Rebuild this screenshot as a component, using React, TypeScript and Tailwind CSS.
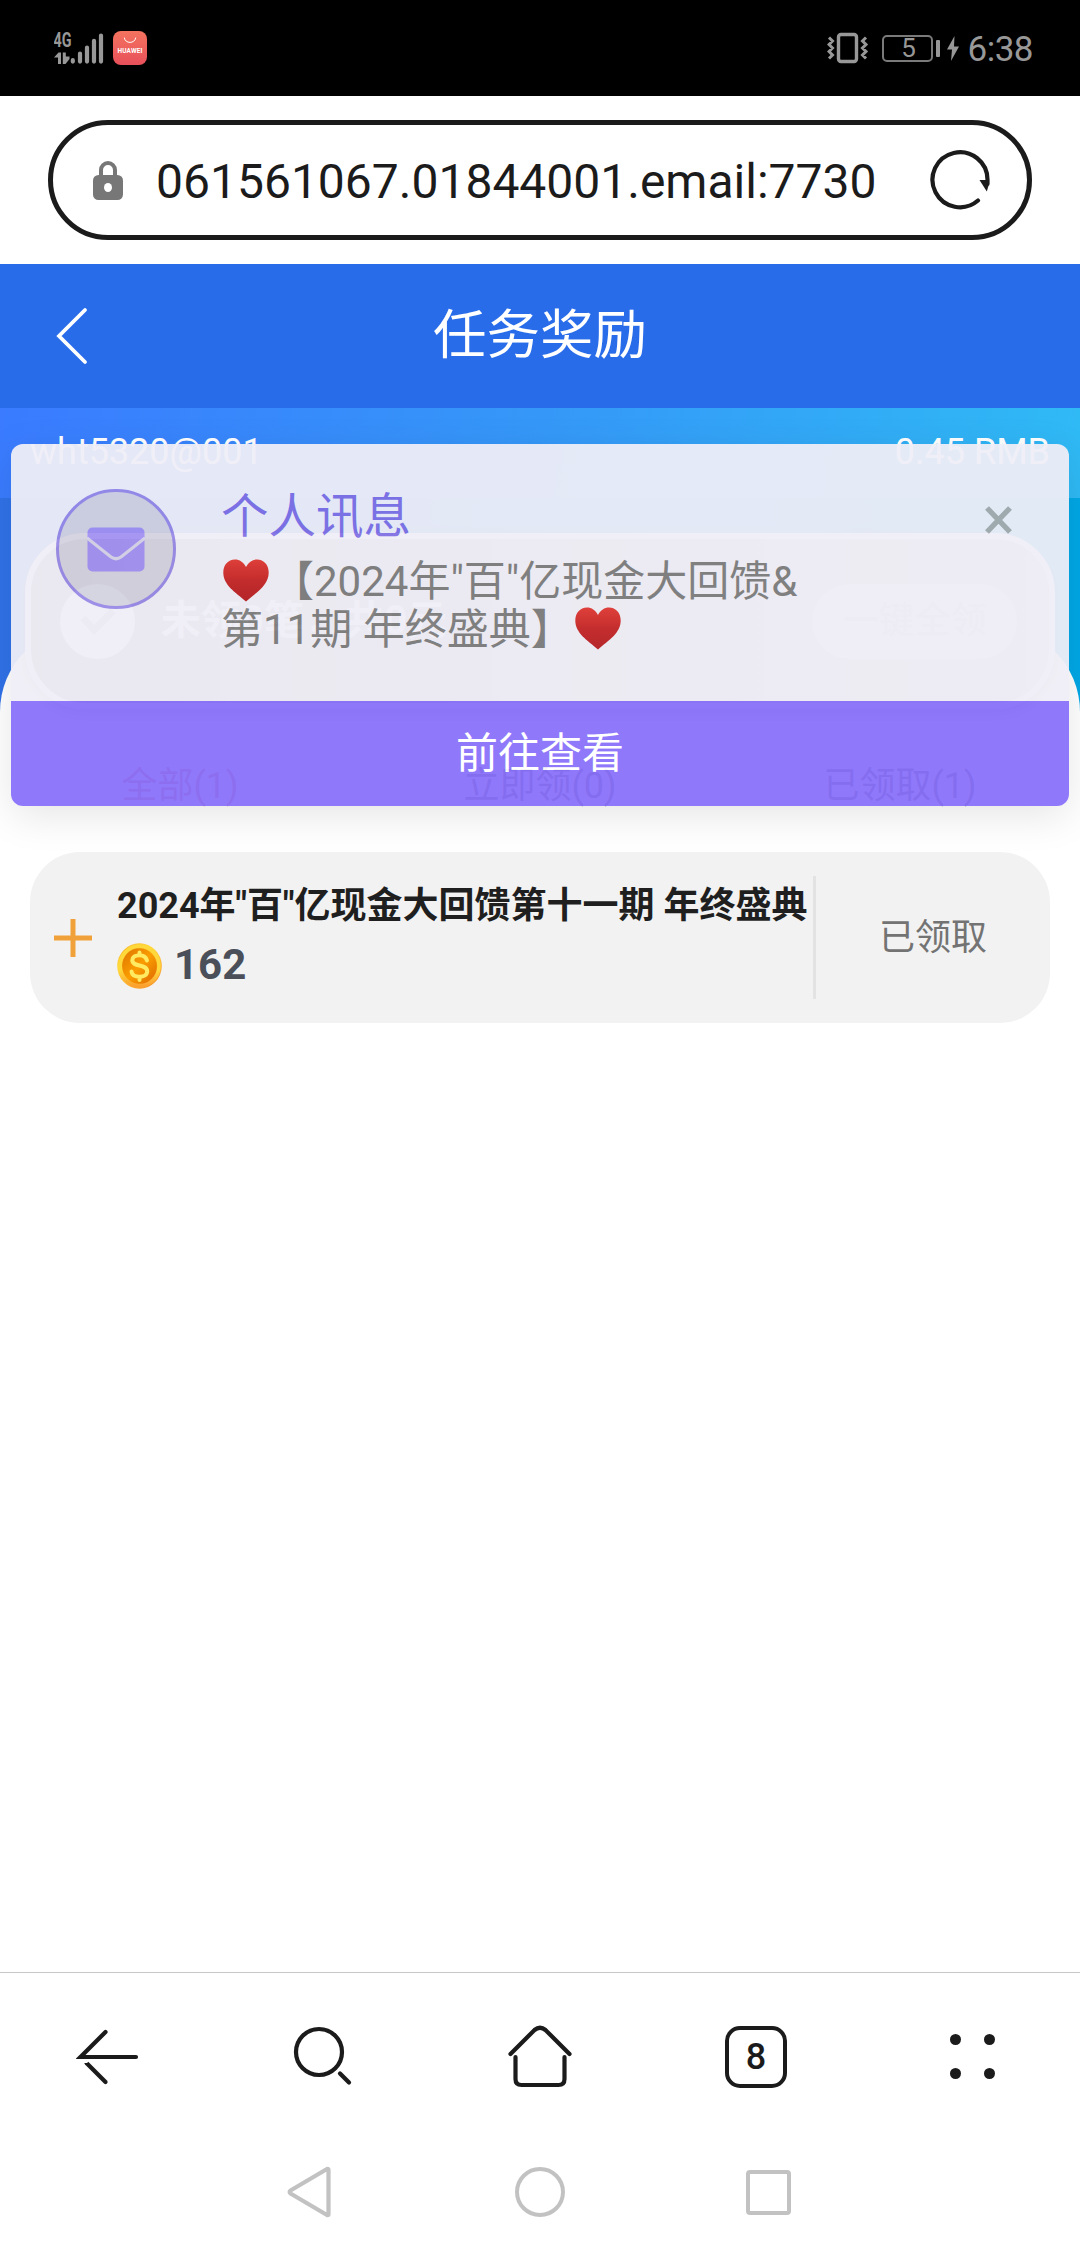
import React from 'react';

const TABS = [
  { key: 'all', label: '全部(1)', active: true },
  { key: 'claimable', label: '立即领(0)', active: false },
  { key: 'claimed', label: '已领取(1)', active: false },
];

const SignalIcon: React.FC = () => (
  <svg width="52" height="36" viewBox="0 0 52 36" className="shrink-0 text-[#989898]" fill="currentColor">
    <text x="-0.5" y="15.5" fontSize="19.5" fontWeight="700" textLength="18" lengthAdjust="spacingAndGlyphs" fontFamily="Roboto, sans-serif">
      4G
    </text>
    <path d="M0 26.5L4.5 21.5H7V33H4V26.5ZM8.8 21.5H11.8V25.5H15.5V28L11.5 33H8.800Z" />
    <path
      d="M18.8 29.2V30.600M26 22.500V30.600M33 16.500V30.600M40 9.800V30.600M47 4.500V30.600"
      stroke="currentColor"
      strokeWidth="4.200"
      strokeLinecap="round"
    />
  </svg>
);

const StoreBadge: React.FC = () => (
  <div className="flex h-[34px] w-[34px] flex-col items-center rounded-[8px] bg-linear-to-b from-[#f4735f] to-[#e8505a] text-white">
    <svg width="14" height="7" viewBox="0 0 14 7" className="mt-[6px]" fill="none" stroke="currentColor" strokeWidth="1">
      <path d="M1.3 0.6C2 7 12 7 12.7 0.6" />
    </svg>
    <span className="mt-[3px] text-[6.5px] leading-[8px] font-bold tracking-[0.1px]">HUAWEI</span>
  </div>
);

const VibrateIcon: React.FC = () => (
  <svg width="42" height="34" viewBox="0 0 42 34" fill="none" stroke="#989898">
    <rect x="11.5" y="3.500" width="18" height="27" rx="2.500" strokeWidth="3.400" />
    <path d="M2 6.500L5.500 10L2 13.500L5.500 17L2 20.500L5.500 24L2 27.500M39 6.500L35.500 10L39 13.500L35.500 17L39 20.500L35.500 24L39 27.500" strokeWidth="3" />
  </svg>
);

const StatusBar: React.FC = () => (
  <div className="flex h-24 items-start justify-between bg-black pr-[47px] pl-[54px] text-[#989898]">
    <div className="flex items-start gap-[7px] pt-[31px]">
      <SignalIcon />
      <StoreBadge />
    </div>
    <div className="box-content flex h-[34px] items-center pt-[31px]">
      <VibrateIcon />
      <div className="ml-[13px] flex h-[27px] w-[51px] items-center justify-center rounded-[5px] border-2 border-[#7a7a7a] pl-[3px] text-[26px] leading-none">
        5
      </div>
      <div className="ml-[3px] h-[17px] w-[4px] rounded-[1px] bg-[#989898]" />
      <svg width="14" height="26" viewBox="0 0 14 26" fill="#989898" className="ml-[6px]">
        <path d="M8.500 1L1 14.500H6L5 26L13 11.500H8Z" />
      </svg>
      <div className="ml-[8px] pt-[2px] text-[35px] leading-none tracking-[-0.5px]">6:38</div>
    </div>
  </div>
);

const AddressBar: React.FC = () => (
  <div className="flex h-[168px] items-center bg-white px-12">
    <div className="flex h-[120px] w-full items-center rounded-full border-[5px] border-[#1b1b1b] pr-[37px] pl-[40px]">
      <svg width="30" height="40" viewBox="0 0 30 40" className="shrink-0">
        <path d="M8 16V10A7 7 0 0 1 22 10V16" fill="none" stroke="#777" strokeWidth="4" />
        <rect x="0" y="15" width="30" height="25" rx="5.500" fill="#777" />
        <ellipse cx="15" cy="27.500" rx="4" ry="4.500" fill="#fff" />
      </svg>
      <div className="ml-[33px] flex-1 pt-[3px] text-[48px] leading-[56px] whitespace-nowrap text-[#1b1b1b]">
        061561067.01844001.email:7730
      </div>
      <svg width="60" height="60" viewBox="0 0 60 60" fill="none">
        <path d="M48 50.500A27.500 27.500 0 1 1 57.500 30V34" stroke="#1b1b1b" strokeWidth="4.200" strokeLinecap="round" />
        <path d="M49.500 30H59V34L56.800 41.500Z" fill="#1b1b1b" />
      </svg>
    </div>
  </div>
);

const Heart: React.FC = () => (
  <svg width="46" height="43" viewBox="0 0 46 43" className="mx-[2px] inline-block align-[-6px]">
    <defs>
      <linearGradient id="heart" x1="0" y1="0" x2="0" y2="1">
        <stop offset="0" stopColor="#e23a34" />
        <stop offset="0.5" stopColor="#c62626" />
        <stop offset="1" stopColor="#b51f22" />
      </linearGradient>
    </defs>
    <path
      d="M23 8C20.5 3 16.5 0.5 12 0.5C5 0.5 0.3 6 0.3 13.5C0.3 26 12 33 23 42.5C34 33 45.7 26 45.7 13.5C45.7 6 41 0.5 34 0.5C29.5 0.5 25.5 3 23 8Z"
      fill="url(#heart)"
    />
  </svg>
);

const MessagePopup: React.FC = () => (
  <div className="absolute top-[180px] left-[11px] z-20 w-[1058px] overflow-hidden rounded-[12px] opacity-[0.94]">
    <div className="flex h-[257px] items-start bg-[#f0eff7] pl-[45px]">
      <div className="mt-[45px] flex h-[120px] w-[120px] shrink-0 items-center justify-center rounded-full border-[3px] border-[#9889e6] bg-[#d4d2e0]">
        <svg width="58" height="45" viewBox="0 0 58 45">
          <rect x="0.5" y="0.5" width="57" height="44" rx="5" fill="#a290f2" />
          <path d="M0 11L24 30Q29 33.500 34 30L58 11" fill="none" stroke="#d6d3ea" strokeWidth="3.200" />
        </svg>
      </div>
      <div className="mt-[43px] ml-[45px] flex-1">
        <div className="text-[47.5px] leading-[60px] text-[#8070e4]">个人讯息</div>
        <div className="mt-[11px] text-[42px] leading-[48px] whitespace-nowrap text-[#7d7d7d]">
          <div className="h-[48px]">
            <Heart />
            <span className="ml-[1px]">【2024年"百"亿现金大回馈&amp;</span>
          </div>
          <div className="h-[48px]">
            第11期 年终盛典】
            <Heart />
          </div>
        </div>
      </div>
      <svg width="27" height="28" viewBox="0 0 27 28" className="mt-[62px] mr-[57px]" stroke="#a9abab" strokeWidth="5.400">
        <path d="M2 2L25 26M25 2L2 26" />
      </svg>
    </div>
    <div className="flex h-[105px] items-center justify-center bg-[#8970fa] text-[42px] text-white">前往查看</div>
  </div>
);

const Coin: React.FC = () => (
  <svg width="45" height="46" viewBox="0 0 45 46">
    <defs>
      <linearGradient id="rim" x1="0" y1="0" x2="0.6" y2="1">
        <stop offset="0" stopColor="#f9a825" />
        <stop offset="0.4" stopColor="#ffd93b" />
        <stop offset="1" stopColor="#f99a2c" />
      </linearGradient>
      <linearGradient id="innerRim" x1="0" y1="0" x2="0" y2="1">
        <stop offset="0" stopColor="#ffd83a" />
        <stop offset="0.6" stopColor="#ffd93b" />
        <stop offset="1" stopColor="#fba030" />
      </linearGradient>
      <linearGradient id="face" x1="0" y1="0" x2="1" y2="1">
        <stop offset="0" stopColor="#dd7200" />
        <stop offset="0.5" stopColor="#fa9d00" />
        <stop offset="1" stopColor="#dd6600" />
      </linearGradient>
    </defs>
    <ellipse cx="22.5" cy="23" rx="22.3" ry="22.8" fill="url(#rim)" />
    <ellipse cx="22.5" cy="23" rx="19.5" ry="20" fill="none" stroke="url(#innerRim)" strokeWidth="3.500" />
    <ellipse cx="22.5" cy="23" rx="17.4" ry="17.8" fill="url(#face)" />
    <path
      d="M30 17.5C29 13.5 26 12.2 22.5 12.2C18.5 12.2 15.3 14 15.3 17.3C15.3 24.5 30.2 20.5 30.2 28.3C30.2 32 26.8 33.8 22.5 33.8C18.5 33.8 15 32.2 14.5 28.5M22.5 9.500V12M22.5 34V37"
      fill="none"
      stroke="#ffea62"
      strokeWidth="4"
      strokeLinecap="round"
    />
  </svg>
);

const Banner: React.FC = () => (
  <div className="h-[304px] bg-linear-to-r from-[#3072e8] to-[#00a8e6]">
    <div className="flex h-[90px] items-start justify-between bg-linear-[100deg,#3a7bff,#3598f8_50%,#2fbaf5] px-[30px] pt-[22px] text-[36px] leading-[44px] text-white">
      <span>wht5320@001</span>
      <span>0.45 RMB</span>
    </div>
    <div className="relative z-10 mx-[25px] mt-[35px] flex h-[176px] items-center rounded-[60px] border-[6px] border-[#f8f8ff] bg-linear-to-r from-[#8f8a90] to-[#cfc8cc] pr-[32px] pl-[29px] shadow-[0_4px_12px_rgba(0,0,0,0.3)]">
      <div className="flex h-[75px] w-[75px] items-center justify-center rounded-full bg-[#f6f6fc]">
        <svg width="36" height="30" viewBox="0 0 36 30" fill="none" stroke="#b5b2b8" strokeWidth="7">
          <path d="M3 12L14 24L33 5" />
        </svg>
      </div>
      <div className="ml-[26px] flex-1 text-[40px] font-bold text-[#f2f2f8]">未领0笔，共0元</div>
      <div className="flex h-[75px] w-[205px] items-center justify-center rounded-full bg-[#e4dfe6] text-[36px] font-medium text-[#c8c2ca]">
        一键全领
      </div>
    </div>
  </div>
);

const RewardItem: React.FC = () => (
  <div className="mx-[30px] flex h-[171px] items-center rounded-[50px] bg-[#f2f2f2]">
    <svg width="38" height="38" viewBox="0 0 38 38" className="ml-[24px] shrink-0" stroke="#f0a13a" strokeWidth="5">
      <path d="M19 0V38M0 19H38" />
    </svg>
    <div className="ml-[25px] h-[138px] w-[696px]">
      <div className="pt-[7px] text-[36px] leading-[60px] font-bold whitespace-nowrap text-[#1f1f1f]">
        2024年"百"亿现金大回馈第十一期 年终盛典
      </div>
      <div className="flex items-center">
        <div className="mt-[6px]">
          <Coin />
        </div>
        <span className="mt-[4px] ml-[12px] text-[42px] leading-[50px] font-bold text-[#4b4f59]">162</span>
      </div>
    </div>
    <div className="h-[123px] w-[3px] bg-[#e3e3e3]" />
    <div className="flex-1 text-center text-[36px] text-[#737373]">已领取</div>
  </div>
);

const BrowserToolbar: React.FC = () => (
  <div className="grid h-[170px] grid-cols-5 items-center justify-items-center border-t border-[#c8c8c8] pb-[2px] text-[#1b1b1b]">
    <svg width="64" height="64" viewBox="0 0 64 64" fill="none" stroke="currentColor" strokeWidth="4.200" strokeLinecap="round">
      <path d="M29.500 7L4.500 32H60" />
      <path d="M10.500 38L29.500 57" />
      <path d="M5 35.200H14L11 38H7Z" fill="#fff" stroke="none" />
    </svg>
    <svg width="64" height="64" viewBox="0 0 64 64" fill="none" stroke="currentColor" strokeWidth="4.200" strokeLinecap="round">
      <circle cx="27" cy="27" r="23" />
      <path d="M48 48.500L57 57.500" />
    </svg>
    <svg width="66" height="66" viewBox="0 0 66 66" fill="none" stroke="currentColor" strokeWidth="4.200" strokeLinecap="round">
      <path d="M3.500 30L27.500 6Q33 1.500 38.500 6L62.500 30" />
      <path d="M8.500 33V55Q8.500 61 14.500 61H51.500Q57.500 61 57.500 55V33" />
    </svg>
    <div className="flex h-[62px] w-[62px] items-center justify-center rounded-[15px] border-[4px] border-current text-[36px] leading-none font-medium">
      8
    </div>
    <div className="grid grid-cols-2 gap-[23px]">
      <i className="h-[11px] w-[11px] rounded-full bg-current" />
      <i className="h-[11px] w-[11px] rounded-full bg-current" />
      <i className="h-[11px] w-[11px] rounded-full bg-current" />
      <i className="h-[11px] w-[11px] rounded-full bg-current" />
    </div>
  </div>
);

const SystemNav: React.FC = () => (
  <div className="flex h-[102px] items-center justify-center gap-[179px] pb-[2px] text-[#c2c2c2]">
    <svg width="50" height="52" viewBox="0 0 50 52" fill="none" stroke="currentColor" strokeWidth="4.200" strokeLinejoin="round">
      <path d="M42.500 3.500V48.500Q42.500 49.500 41 49L4.500 27.500Q3 26 4.500 24.500L41 3Q42.500 2.500 42.500 3.500Z" />
    </svg>
    <div className="h-[50px] w-[50px] rounded-full border-[4px] border-current" />
    <div className="flex w-[50px] justify-center pr-px">
      <div className="h-[45px] w-[45px] rounded-[4px] border-[4px] border-current" />
    </div>
  </div>
);

export default function App() {
  return (
    <div className="flex h-[2244px] w-[1080px] flex-col overflow-hidden bg-white font-[Roboto,'Noto_Sans_CJK_SC',sans-serif]">
      <StatusBar />
      <AddressBar />
      <main className="relative flex-1">
        <header className="grid h-36 grid-cols-3 items-center bg-[#286cea] text-white">
          <svg width="34" height="60" viewBox="0 0 34 60" className="ml-[55px]" fill="none" stroke="currentColor" strokeWidth="3.800" strokeLinecap="round">
            <path d="M30 4L4 30L30 56" />
          </svg>
          <h1 className="pb-[1px] text-center text-[53.5px] leading-[72px]">任务奖励</h1>
        </header>
        <Banner />
        <section className="relative -mt-[86px] rounded-t-[86px] bg-white pt-[130px]">
          <div className="grid grid-cols-3 text-center text-[36px] leading-[60px] text-[#444]">
            {TABS.map((t) => (
              <div key={t.key} className={t.active ? 'text-[#c8594c]' : undefined}>
                {t.label}
              </div>
            ))}
          </div>
          <div className="pt-[36px]">
            <RewardItem />
          </div>
        </section>
        <div className="absolute top-[180px] left-[11px] z-10 h-[362px] w-[1058px] rounded-[12px] shadow-[0_10px_40px_rgba(0,0,0,0.1)]" />
        <MessagePopup />
      </main>
      <BrowserToolbar />
      <SystemNav />
    </div>
  );
}
